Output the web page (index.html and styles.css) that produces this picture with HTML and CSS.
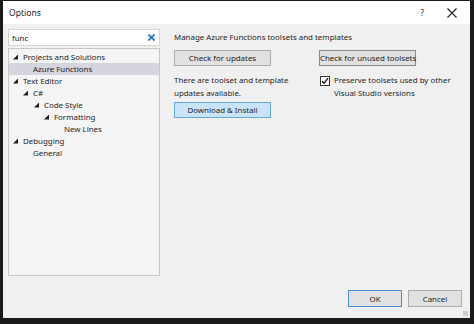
FILE: index.html
```html
<!DOCTYPE html>
<html lang="en">
<head>
    <meta charset="UTF-8">
    <title>Options</title>
    <link rel="stylesheet" href="styles.css">
</head>
<body>
    <div class="window">
        <div class="titlebar">
            <span class="title">Options</span>
            <span class="help">?</span>
            <span class="close">
                <svg width="10" height="10" viewBox="0 0 10 10"><path d="M0.5 0.5L9.5 9.5M9.5 0.5L0.5 9.5" stroke="#222" stroke-width="1.1"/></svg>
            </span>
        </div>
        <div class="content">
            <div class="left">
                <div class="search">
                    <span>func</span>
                    <svg class="clear" width="7" height="7" viewBox="0 0 7 7"><path d="M0.5 0.5L6.5 6.5M6.5 0.5L0.5 6.5" stroke="#1e6fc8" stroke-width="1.6"/></svg>
                </div>
                <ul class="tree">
                    <li class="lvl0"><i class="arrow"></i>Projects and Solutions</li>
                    <li class="lvl1 selected"><i class="leaf"></i>Azure Functions</li>
                    <li class="lvl0"><i class="arrow"></i>Text Editor</li>
                    <li class="lvl1"><i class="arrow"></i>C#</li>
                    <li class="lvl2"><i class="arrow"></i>Code Style</li>
                    <li class="lvl3"><i class="arrow"></i>Formatting</li>
                    <li class="lvl4"><i class="leaf"></i>New Lines</li>
                    <li class="lvl0"><i class="arrow"></i>Debugging</li>
                    <li class="lvl1"><i class="leaf"></i>General</li>
                </ul>
            </div>
            <div class="right">
                <p class="heading">Manage Azure Functions toolsets and templates</p>
                <div class="cols">
                    <div class="col first">
                        <button class="btn">Check for updates</button>
                        <p class="note">There are toolset and template<br>updates available.</p>
                        <button class="btn primary">Download &amp; Install</button>
                    </div>
                    <div class="col">
                        <button class="btn dark">Check for unused toolsets</button>
                        <label class="check">
                            <span class="box">
                                <svg width="8" height="8" viewBox="0 0 8 8"><path d="M1 4.2L3 6.3L7 1.2" fill="none" stroke="#111" stroke-width="1.3"/></svg>
                            </span>
                            <span>Preserve toolsets used by other<br>Visual Studio versions</span>
                        </label>
                    </div>
                </div>
            </div>
        </div>
        <div class="footer">
            <button class="btn footbtn default">OK</button>
            <button class="btn footbtn">Cancel</button>
        </div>
        <span class="grip"></span>
    </div>
</body>
</html>
```

FILE: styles.css
```css
* {
    margin: 0;
    padding: 0;
    list-style: none;
    box-sizing: border-box;
}
body {
    background: #1a1a1a;
    padding: 1px 4px 0 3px;
    font-family: "Noto Sans", "Open Sans", sans-serif;
    font-size: 7.9px;
    color: #1e1e1e;
}
.window {
    position: relative;
    width: 467px;
    height: 317px;
    background: #f0f0f0;
    display: flex;
    flex-direction: column;
}
.titlebar {
    height: 23px;
    background: #fff;
    display: flex;
    align-items: center;
    padding-left: 6px;
    font-size: 8.6px;
}
.title {
    flex: 1;
    color: #222;
}
.help {
    width: 12px;
    margin-right: 19px;
    text-align: center;
    color: #333;
}
.close {
    width: 10px;
    height: 10px;
    margin-right: 13px;
    display: flex;
}
.content {
    display: flex;
    gap: 14px;
    padding: 5px 0 0 5px;
}
.left {
    width: 152px;
    flex-shrink: 0;
    display: flex;
    flex-direction: column;
    gap: 2px;
}
.search {
    height: 17px;
    background: #fff;
    border: 1px solid #d6d6d6;
    display: flex;
    align-items: center;
    justify-content: space-between;
    padding: 0 4px 0 3px;
}
.tree {
    height: 228px;
    background: #f5f5f5;
    border: 1px solid #c8c8c8;
    padding-top: 2px;
}
.tree li {
    height: 12px;
    line-height: 12px;
    display: flex;
    align-items: center;
    white-space: nowrap;
}
.tree li i {
    display: inline-block;
}
.tree .arrow {
    width: 5px;
    height: 5px;
    background: #1e1e1e;
    clip-path: polygon(5px 0, 5px 5px, 0 5px);
    margin-left: 3px;
    margin-right: 5px;
}
.tree .leaf {
    width: 13px;
}
.tree .lvl0 { padding-left: 1px; }
.tree .lvl1 { padding-left: 11px; }
.tree .lvl2 { padding-left: 22px; }
.tree .lvl3 { padding-left: 32px; }
.tree .lvl4 { padding-left: 42px; }
.tree .selected {
    background: #d4d5df;
}
.right {
    flex: 1;
    padding-top: 1px;
    white-space: nowrap;
}
.heading {
    line-height: 14px;
}
.cols {
    display: flex;
    margin-top: 6px;
}
.col {
    display: flex;
    flex-direction: column;
    align-items: flex-start;
}
.col.first {
    width: 145px;
}
.btn {
    font-family: inherit;
    font-size: inherit;
    color: #1e1e1e;
    background: #e1e1e1;
    border: 1px solid #adadad;
    height: 16px;
    width: 97px;
    line-height: 14px;
    white-space: nowrap;
}
.btn.dark {
    border-color: #8a8a8a;
}
.btn.primary {
    background: #c9e3f8;
    border-color: #6aa7df;
}
.note {
    line-height: 13px;
    margin: 8px 0 2px;
}
.check {
    display: flex;
    gap: 4px;
    line-height: 13px;
    margin-top: 8px;
    padding-left: 1px;
}
.box {
    width: 10px;
    height: 10px;
    margin-top: 2px;
    background: #fff;
    border: 1px solid #333;
    display: flex;
    align-items: center;
    justify-content: center;
}
.footer {
    margin-top: auto;
    display: flex;
    justify-content: flex-end;
    gap: 6px;
    padding: 0 8px 11px 0;
}
.footbtn {
    width: 54px;
    height: 17px;
}
.footbtn.default {
    border-color: #4a8fd6;
}
.grip {
    position: absolute;
    right: 2px;
    bottom: 2px;
    width: 5px;
    height: 5px;
    background: radial-gradient(circle, #aaa 0.6px, transparent 0.8px) 0 0 / 2px 2px;
}
```
